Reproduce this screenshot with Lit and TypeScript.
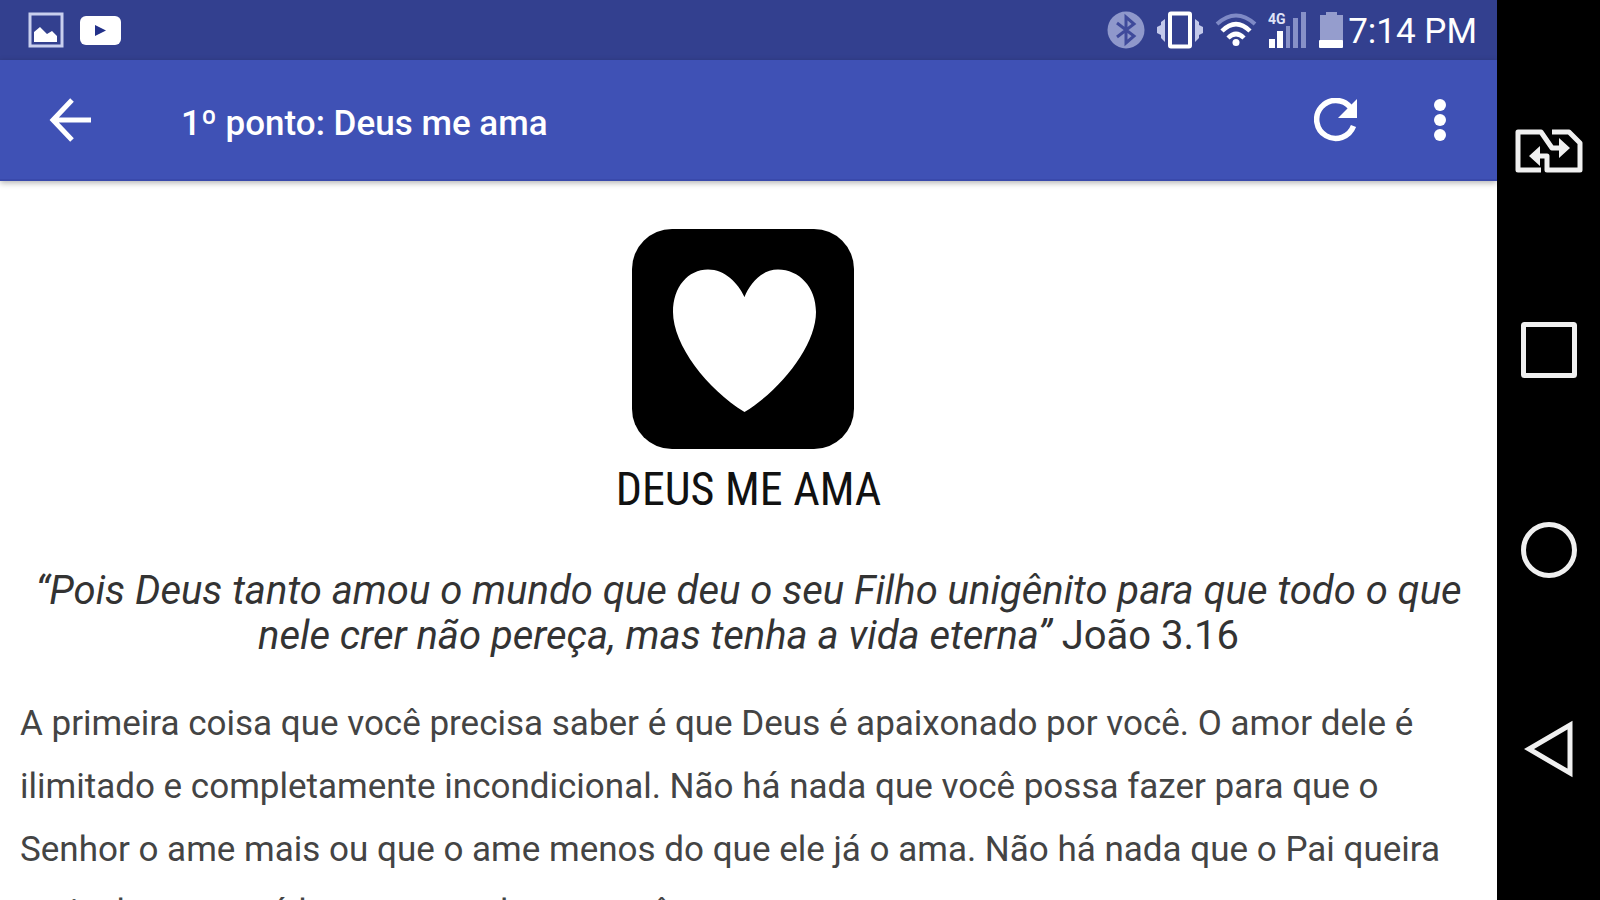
import { LitElement, html, css } from "lit";
import { customElement } from "lit/decorators.js";

@customElement("app-root")
export class AppRoot extends LitElement {
  static styles = css`
    :host {
      display: flex;
      height: 100vh;
      overflow: hidden;
      font-family: Roboto, sans-serif;
      background: #fff;
    }
    * { box-sizing: border-box; }
    svg { display: block; flex: none; }
    button {
      display: flex;
      align-items: center;
      justify-content: center;
      border: 0;
      padding: 0;
      margin: 0;
      background: none;
      color: inherit;
      cursor: pointer;
    }
    .screen {
      flex: 1;
      min-width: 0;
      display: flex;
      flex-direction: column;
    }
    .status {
      flex: none;
      height: 60px;
      display: flex;
      align-items: center;
      justify-content: space-between;
      padding: 0 20px 0 28px;
      background: #33408f;
      color: #fff;
    }
    .notifications { display: flex; align-items: center; gap: 16px; }
    .system { display: flex; align-items: center; gap: 11px; }
    .power { display: flex; align-items: center; gap: 4px; }
    .network {
      font-family: Roboto, sans-serif;
      font-size: 14px;
      font-weight: 700;
    }
    .clock { padding-top: 4px; font-size: 35px; line-height: 56px; }
    .bar {
      flex: none;
      height: 121px;
      display: flex;
      align-items: center;
      padding: 0 17px 0 31px;
      background: #3f51b5;
      border-bottom: 2px solid #3949ab;
      box-shadow: 0 2px 6px rgba(0, 0, 0, 0.3);
      color: #fff;
      z-index: 1;
    }
    .bar button { width: 80px; height: 80px; }
    .actions { display: flex; gap: 24px; }
    h1 {
      flex: 1;
      margin: 0 0 0 70px;
      padding-top: 8px;
      font-size: 35px;
      font-weight: 500;
      line-height: 48px;
    }
    main { flex: 1; min-height: 0; overflow: hidden; padding: 48px 20px 0; }
    figure {
      margin: 0;
      display: flex;
      flex-direction: column;
      align-items: center;
      color: #111;
    }
    figcaption {
      margin-top: 8px;
      font-family: "Roboto Condensed", "Liberation Sans Narrow", sans-serif;
      font-size: 46px;
      line-height: 64px;
    }
    blockquote {
      margin: 47px 0 0;
      font-size: 40px;
      line-height: 45px;
      text-align: center;
      color: #333;
    }
    .text { margin: 34px 0 0; font-size: 35px; line-height: 63px; color: #444; }
    nav {
      flex: none;
      width: 103px;
      display: flex;
      flex-direction: column;
      align-items: center;
      justify-content: space-between;
      padding: 101px 0;
      background: #000;
      color: #f0f0f0;
    }
    nav button { width: 100px; height: 100px; }
  `;

  render() {
    return html`
      <div class="screen">
        <div class="status">
          <div class="notifications">
            <svg width="36" height="36" viewBox="0 0 36 36" aria-hidden="true">
              <rect x="2" y="2" width="32" height="32" fill="none" stroke="#c9cfee" stroke-width="3" />
              <path d="M6 30V20L12 15L19 22L24 19L29 24V30Z" fill="#fff" />
            </svg>
            <svg width="41" height="29" viewBox="0 0 41 29" aria-hidden="true">
              <rect width="41" height="29" rx="6" fill="#fff" />
              <path d="M15 9L26 14.5L15 20Z" fill="#23318a" />
            </svg>
          </div>
          <div class="system">
            <svg width="38" height="38" viewBox="0 0 38 38" aria-hidden="true">
              <circle cx="19" cy="19" r="18.5" fill="#8f98cb" />
              <path d="M10 12L27 25L19 32V6L27 13L10 26" fill="none" stroke="#3f4a9b" stroke-width="3" />
            </svg>
            <svg width="48" height="38" viewBox="0 0 48 38" aria-hidden="true">
              <rect x="14" y="2.5" width="20" height="33" rx="1" fill="none" stroke="#fff" stroke-width="4" />
              <path d="M9 8V31L5 27V24L1 22V16L5 14V11ZM39 8V31L43 27V24L47 22V16L43 14V11Z" fill="#c3c9ea" />
            </svg>
            <svg width="42" height="36" viewBox="0 0 42 36" fill="none" aria-hidden="true">
              <path d="M2 12Q21 -5 40 12" stroke="#7f8ac6" stroke-width="4" />
              <path d="M7 19Q21 5 35 19" stroke="#fff" stroke-width="4.5" />
              <path d="M13 26Q21 18 29 26" stroke="#fff" stroke-width="4.5" />
              <circle cx="21" cy="30.5" r="3.5" fill="#fff" />
            </svg>
            <svg width="40" height="38" viewBox="0 0 40 38">
              <text class="network" x="0" y="13" fill="#dfe3f7">4G</text>
              <path d="M1 28H7V37H1ZM9 20H15V37H9Z" fill="#fff" />
              <path d="M18 15H22V37H18ZM25 7H30V37H25ZM33 1H38V37H33Z" fill="#8791c8" />
            </svg>
            <div class="power">
              <svg width="25" height="36" viewBox="0 0 25 36" aria-hidden="true">
                <path d="M1 3H7V0H18V3H24V29H1Z" fill="#959dcd" />
                <rect x="0" y="28" width="24" height="8" rx="1" fill="#fff" />
              </svg>
              <div class="clock">7:14 PM</div>
            </div>
          </div>
        </div>
        <header class="bar">
          <button aria-label="Voltar">
            <svg width="44" height="44" viewBox="0 0 44 44" fill="none" stroke="#fff" stroke-width="5"><path d="M23 2L4 22L23 42M4 22H42" /></svg>
          </button>
          <h1>1º ponto: Deus me ama</h1>
          <div class="actions">
            <button aria-label="Atualizar">
              <svg width="44" height="44" viewBox="0 0 44 44">
                <path d="M36.5 9.5A19 19 0 1 0 39.5 28" fill="none" stroke="#fff" stroke-width="5.5" />
                <path d="M43 1V20H24Z" fill="#fff" />
              </svg>
            </button>
            <button aria-label="Mais opções">
              <svg width="12" height="44" viewBox="0 0 12 44" fill="#fff">
                <circle cx="6" cy="7" r="6" /><circle cx="6" cy="22" r="6" /><circle cx="6" cy="37" r="6" />
              </svg>
            </button>
          </div>
        </header>
        <main>
          <figure>
            <svg width="296" height="220" viewBox="0 0 296 220" aria-hidden="true">
              <rect x="31" width="222" height="220" rx="40" fill="#000" />
              <path d="M143.5 68C137 54 124 40.500 107 40.500C87 40.500 72 58 72 83C72 116 106 160 143.5 183C181 160 215 116 215 83C215 58 198 40.500 177 40.500C161 40.500 149 54 143.5 68Z" fill="#fff" />
            </svg>
            <figcaption>DEUS ME AMA</figcaption>
          </figure>
          <blockquote><i>“Pois Deus tanto amou o mundo que deu o seu Filho unigênito para que todo o que nele crer não pereça, mas tenha a vida eterna”</i> João 3.16</blockquote>
          <p class="text">A primeira coisa que você precisa saber é que Deus é apaixonado por você. O amor dele é ilimitado e completamente incondicional. Não há nada que você possa fazer para que o Senhor o ame mais ou que o ame menos do que ele já o ama. Não há nada que o Pai queira mais do que amá-lo e ser amado por você.</p>
        </main>
      </div>
      <nav aria-label="Navegação do sistema">
        <button aria-label="Alternar chip">
          <svg width="68" height="44" viewBox="0 0 68 44" fill="none" stroke="currentColor" stroke-width="5">
            <path d="M26 41H3V3H26L37 19H46M37 3H54L65 14V41H32V27H22" stroke-linejoin="round" />
            <path d="M44 9L55 19L44 29ZM25 17L14 27L25 37Z" fill="currentColor" stroke="none" />
          </svg>
        </button>
        <button aria-label="Recentes">
          <svg width="56" height="56" viewBox="0 0 56 56" fill="none" stroke="currentColor" stroke-width="5"><rect x="2.5" y="2.5" width="51" height="51" rx="1" /></svg>
        </button>
        <button aria-label="Início">
          <svg width="56" height="56" viewBox="0 0 56 56" fill="none" stroke="currentColor" stroke-width="5"><circle cx="28" cy="28" r="25.5" /></svg>
        </button>
        <button aria-label="Voltar">
          <svg width="50" height="58" viewBox="0 0 50 58" fill="none" stroke="currentColor" stroke-width="5"><path d="M46 5V53L5 29Z" /></svg>
        </button>
      </nav>
    `;
  }
}
